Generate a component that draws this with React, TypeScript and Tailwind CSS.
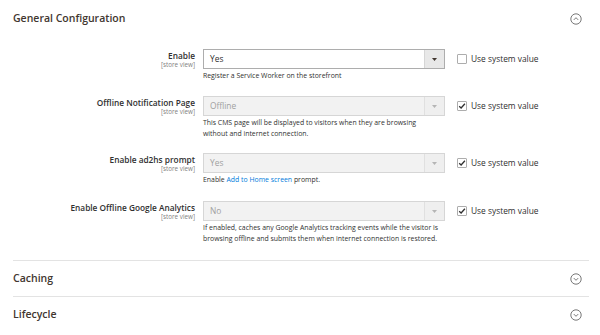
import React from 'react';

const CircleChevron = ({ up }: { up?: boolean }) => (
  <svg width="12" height="12" viewBox="0 0 12 12" fill="none" stroke="#555" strokeWidth="0.8">
    <circle cx="6" cy="6" r="5.2" />
    {up ? <path d="M3.8 6.9 L6 4.7 L8.2 6.9" /> : <path d="M3.8 5.1 L6 7.3 L8.2 5.1" />}
  </svg>
);

const Checkbox = ({ checked }: { checked?: boolean }) => (
  <span className="flex h-[10px] w-[10px] items-center justify-center rounded-[1px] border border-[#adadad] bg-white">
    {checked && (
      <svg width="8" height="8" viewBox="0 0 8 8" fill="none" stroke="#303030" strokeWidth="1.3">
        <path d="M1.2 4.2 L3.1 6 L6.9 1.8" />
      </svg>
    )}
  </span>
);

type Row = {
  label: string;
  value: string;
  disabled: boolean;
  help: React.ReactNode;
  gap: string;
};

const rows: Row[] = [
  {
    label: 'Enable',
    value: 'Yes',
    disabled: false,
    help: 'Register a Service Worker on the storefront',
    gap: 'mb-[15px]',
  },
  {
    label: 'Offline Notification Page',
    value: 'Offline',
    disabled: true,
    help: (
      <>
        This CMS page will be displayed to visitors when they are browsing
        <br />
        without and internet connection.
      </>
    ),
    gap: 'mb-[14px]',
  },
  {
    label: 'Enable ad2hs prompt',
    value: 'Yes',
    disabled: true,
    help: (
      <>
        Enable <span className="text-[#007bdb]">Add to Home screen</span> prompt.
      </>
    ),
    gap: 'mb-[16px]',
  },
  {
    label: 'Enable Offline Google Analytics',
    value: 'No',
    disabled: true,
    help: (
      <>
        If enabled, caches any Google Analytics tracking events while the visitor is
        <br />
        browsing offline and submits them when internet connection is restored.
      </>
    ),
    gap: 'mb-[16px]',
  },
];

const Field = ({ row }: { row: Row }) => (
  <div className={`flex items-start ${row.gap}`}>
    <div className="flex w-[182px] flex-col items-end pt-[1px]">
      <span className="text-[8.3px] font-semibold leading-[11px] text-[#303030]">{row.label}</span>
      <span className="text-[6.3px] leading-[8px] text-[#808080]">[store view]</span>
    </div>
    <div className="ml-[8px] w-[242px]">
      <div
        className={`flex h-[20px] items-stretch border ${
          row.disabled ? 'border-[#d6d6d6] bg-[#f2f2f2]' : 'border-[#adadad] bg-white'
        }`}
      >
        <span
          className={`flex flex-1 items-center pl-[6px] text-[8.4px] ${
            row.disabled ? 'text-[#a0a0a0]' : 'text-[#303030]'
          }`}
        >
          {row.value}
        </span>
        <span
          className={`flex w-[20px] items-center justify-center border-l ${
            row.disabled ? 'border-[#e0e0e0] bg-[#efefef]' : 'border-[#d6d6d6] bg-[#e8e8e8]'
          }`}
        >
          <svg width="5" height="3" viewBox="0 0 5 3">
            <path d="M0 0 H5 L2.5 3 Z" fill={row.disabled ? '#b5b5b5' : '#41362f'} />
          </svg>
        </span>
      </div>
      <p className="mt-[1px] whitespace-nowrap text-[6.9px] leading-[11px] text-[#303030]">{row.help}</p>
    </div>
    <label className="ml-[12px] flex h-[20px] items-center gap-[4px]">
      <Checkbox checked={row.disabled} />
      <span className="text-[8.4px] text-[#303030]">Use system value</span>
    </label>
  </div>
);

const Section = ({ title }: { title: string }) => (
  <div className="flex h-[36px] items-center justify-between border-t border-[#e3e3e3] pr-[7px]">
    <span className="text-[10.5px] font-semibold text-[#41362f]">{title}</span>
    <CircleChevron />
  </div>
);

export default function App() {
  return (
    <div
      className="h-[335px] w-[600px] overflow-hidden bg-white pl-[13px] pr-[11px]"
      style={{ fontFamily: '"Open Sans", sans-serif' }}
    >
      <div className="flex h-[37px] items-center justify-between pr-[7px]">
        <span className="text-[10.5px] font-semibold text-[#41362f]">General Configuration</span>
        <CircleChevron up />
      </div>
      <div className="pt-[12px]">
        {rows.map((r) => (
          <Field key={r.label} row={r} />
        ))}
      </div>
      <Section title="Caching" />
      <Section title="Lifecycle" />
    </div>
  );
}
